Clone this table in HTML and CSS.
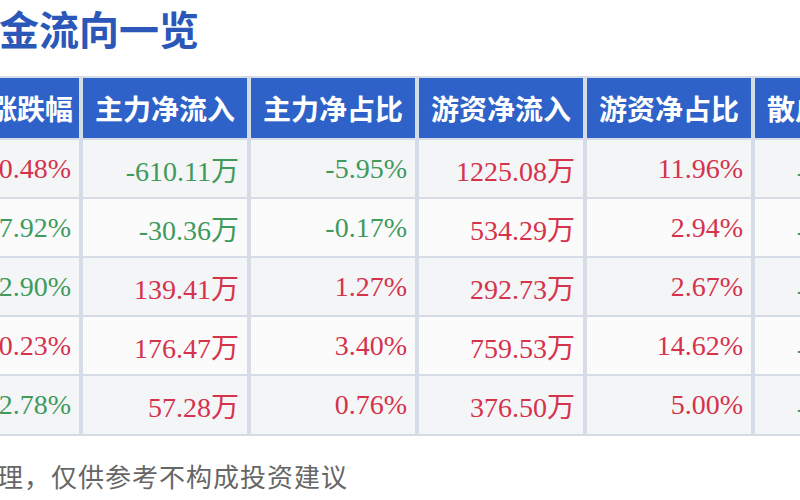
FILE: index.html
```html
<!DOCTYPE html>
<html lang="zh">
<head>
<meta charset="utf-8">
<link rel="stylesheet" href="styles.css">
</head>
<body>
<div class="page">
  <h1 class="title">资金流向一览</h1>
  <div class="table">
    <div class="th">涨跌幅</div>
    <div class="th">主力净流入</div>
    <div class="th">主力净占比</div>
    <div class="th">游资净流入</div>
    <div class="th">游资净占比</div>
    <div class="th">散户净流入</div>

    <div class="td odd up">10.48%</div>
    <div class="td odd down">-610.11万</div>
    <div class="td odd down">-5.95%</div>
    <div class="td odd up">1225.08万</div>
    <div class="td odd up">11.96%</div>
    <div class="td odd down">-614.97万</div>

    <div class="td even down">-7.92%</div>
    <div class="td even down">-30.36万</div>
    <div class="td even down">-0.17%</div>
    <div class="td even up">534.29万</div>
    <div class="td even up">2.94%</div>
    <div class="td even down">-503.93万</div>

    <div class="td odd down">-2.90%</div>
    <div class="td odd up">139.41万</div>
    <div class="td odd up">1.27%</div>
    <div class="td odd up">292.73万</div>
    <div class="td odd up">2.67%</div>
    <div class="td odd down">-432.14万</div>

    <div class="td even up">10.23%</div>
    <div class="td even up">176.47万</div>
    <div class="td even up">3.40%</div>
    <div class="td even up">759.53万</div>
    <div class="td even up">14.62%</div>
    <div class="td even down">-936.00万</div>

    <div class="td odd down">-2.78%</div>
    <div class="td odd up">57.28万</div>
    <div class="td odd up">0.76%</div>
    <div class="td odd up">376.50万</div>
    <div class="td odd up">5.00%</div>
    <div class="td odd down">-433.78万</div>
  </div>
  <p class="note">理，仅供参考不构成投资建议</p>
</div>
</body>
</html>
```

FILE: styles.css
```css
html, body {
  margin: 0;
  padding: 0;
  background: #ffffff;
}

body {
  width: 800px;
  height: 500px;
  overflow: hidden;
}

.page {
  width: 800px;
  height: 500px;
  overflow: hidden;
}

.title {
  margin: 0 0 0 -41px;
  height: 76px;
  font-family: "Noto Sans CJK SC", sans-serif;
  font-size: 40px;
  font-weight: 700;
  line-height: 56px;
  color: #2b58b8;
  white-space: nowrap;
}

.table {
  display: grid;
  grid-template-columns: 96px 164px 164px 164px 164px 164px;
  grid-template-rows: 60px 57px 57px 57px 57px 58px;
  column-gap: 4px;
  row-gap: 2px;
  padding: 2px 0;
  margin-left: -17px;
  width: max-content;
  background: #d6dce5;
}

.th {
  background: #2f62c8;
  color: #ffffff;
  font-family: "Noto Sans CJK SC", sans-serif;
  font-size: 28px;
  font-weight: 700;
  display: flex;
  align-items: center;
  justify-content: center;
  white-space: nowrap;
}

.td {
  display: flex;
  align-items: center;
  justify-content: flex-end;
  padding-right: 8px;
  font-family: "Liberation Serif", "Noto Sans CJK SC", serif;
  font-size: 28px;
  white-space: nowrap;
}

.odd {
  background: #f4f5f7;
}

.even {
  background: #fbfbfc;
}

.up {
  color: #d5334c;
}

.down {
  color: #3f9a5c;
}

.note {
  margin: 20px 0 0 -3px;
  font-family: "Noto Sans CJK SC", sans-serif;
  font-size: 26px;
  letter-spacing: 1px;
  line-height: 40px;
  color: #666666;
  white-space: nowrap;
}
```
